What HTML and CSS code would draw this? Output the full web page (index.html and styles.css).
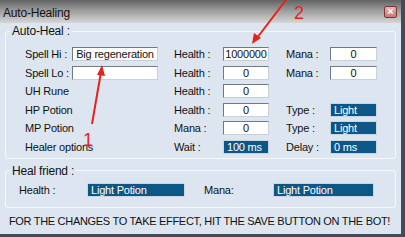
FILE: index.html
```html
<!DOCTYPE html>
<html lang="en">
<head>
    <meta charset="UTF-8">
    <title>Auto-Healing</title>
    <link rel="stylesheet" href="styles.css">
</head>
<body>
    <div class="window">
        <div class="titlebar">
            <span class="title">Auto-Healing</span>
            <span class="close">&#215;</span>
        </div>

        <fieldset class="group">
            <legend>Auto-Heal :</legend>
            <div class="heal-grid">
                <span class="lbl">Spell Hi :</span>
                <span class="field">Big regeneration</span>
                <span class="lbl mid">Health :</span>
                <span class="field">1000000</span>
                <span class="lbl right">Mana :</span>
                <span class="field">0</span>

                <span class="lbl">Spell Lo :</span>
                <span class="field"></span>
                <span class="lbl mid">Health :</span>
                <span class="field">0</span>
                <span class="lbl right">Mana :</span>
                <span class="field">0</span>

                <span class="lbl">UH Rune</span>
                <span></span>
                <span class="lbl mid">Health :</span>
                <span class="field">0</span>
                <span></span>
                <span></span>

                <span class="lbl">HP Potion</span>
                <span></span>
                <span class="lbl mid">Health :</span>
                <span class="field">0</span>
                <span class="lbl right">Type :</span>
                <span class="field sel">Light</span>

                <span class="lbl">MP Potion</span>
                <span></span>
                <span class="lbl mid">Mana :</span>
                <span class="field">0</span>
                <span class="lbl right">Type :</span>
                <span class="field sel">Light</span>

                <span class="lbl wide">Healer options</span>
                <span class="lbl mid">Wait :</span>
                <span class="field sel">100 ms</span>
                <span class="lbl right">Delay :</span>
                <span class="field sel">0 ms</span>
            </div>
        </fieldset>

        <fieldset class="group friend">
            <legend>Heal friend :</legend>
            <div class="friend-row">
                <span class="lbl f-health">Health :</span>
                <span class="field sel f-hfield">Light Potion</span>
                <span class="lbl f-mana">Mana:</span>
                <span class="field sel f-mfield">Light Potion</span>
            </div>
        </fieldset>

        <div class="footer">FOR THE CHANGES TO TAKE EFFECT, HIT THE SAVE BUTTON ON THE BOT!</div>

        <!-- red annotations drawn over the screenshot -->
        <svg class="marks" viewBox="0 0 405 237">
            <line x1="92" y1="124" x2="101" y2="72" stroke="#e3241c" stroke-width="2"/>
            <polygon points="102,65 97,75 105,76" fill="#e3241c"/>
            <text x="83" y="146" class="num">1</text>
            <line x1="286" y1="0" x2="257" y2="38" stroke="#e3241c" stroke-width="2"/>
            <polygon points="252,44 254,33 261,38" fill="#e3241c"/>
            <text x="294" y="19" class="num">2</text>
        </svg>
    </div>
</body>
</html>
```

FILE: styles.css
```css
* { box-sizing: border-box; }

body {
    margin: 0;
    font-family: "Liberation Sans", Arial, sans-serif;
    font-size: 11px;
    letter-spacing: -0.2px;
    color: #111;
}

.window {
    position: relative;
    width: 405px;
    height: 237px;
    background: #dde6f0;
    border-right: 4px solid #3f4c59;
    border-bottom: 3px solid #3f4c59;
    display: flex;
    flex-direction: column;
}

.titlebar {
    height: 23px;
    background: linear-gradient(180deg, #626262 0%, #9c9c9c 45%, #d6d6d6 100%);
    display: flex;
    align-items: center;
    justify-content: space-between;
    padding: 2px 4px 0 3px;
}

.title {
    font-size: 12px;
    color: #111;
}

.close {
    width: 13px;
    height: 12px;
    border: 1px solid #7a3535;
    border-radius: 2px;
    background: linear-gradient(180deg, #e6b0b0, #c97878);
    color: #fff;
    font-size: 11px;
    font-weight: bold;
    line-height: 9px;
    text-align: center;
    margin-top: -2px;
    letter-spacing: 0;
}

.group {
    margin: 1px 5px 0 5px;
    padding: 9px 0 4px 0;
    border: 1px solid #f6f9fc;
    border-radius: 3px;
    min-width: 0;
}

.group legend {
    font-size: 12px;
    line-height: 14px;
    padding: 0 2px;
    margin-left: 4px;
}

.heal-grid {
    display: grid;
    grid-template-columns: 47px 86px 65px 46px 61px 47px;
    grid-auto-rows: 14px;
    row-gap: 4.5px;
    padding-left: 19px;
}

.lbl {
    line-height: 14px;
    white-space: nowrap;
}

.lbl.mid { padding-left: 16px; }
.lbl.right { padding-left: 17px; }
.lbl.wide { grid-column: span 2; }

.field {
    height: 14px;
    line-height: 12px;
    background: #fff;
    border: 1px solid #6f7a85;
    border-right-color: #c8d0d8;
    border-bottom-color: #c8d0d8;
    text-align: center;
    white-space: nowrap;
    overflow: hidden;
}

.field.sel {
    background: #0d5786;
    color: #fff;
    border: 1px solid #c9d6e2;
    text-align: left;
    padding-left: 3px;
}

.friend {
    margin-top: 5px;
    padding: 5px 0 10px 0;
}

.friend-row {
    display: flex;
    align-items: center;
    height: 14px;
}

.f-health { margin-left: 13px; width: 68px; }
.f-hfield { width: 98px; }
.f-mana { margin-left: 19px; width: 69px; }
.f-mfield { width: 101px; }

.footer {
    flex: 1;
    display: flex;
    align-items: center;
    justify-content: center;
    font-size: 11px;
    letter-spacing: -0.3px;
    white-space: nowrap;
    padding-right: 2px;
}

.marks {
    position: absolute;
    left: 0;
    top: 0;
    width: 405px;
    height: 237px;
    pointer-events: none;
}

.num {
    font-family: "Liberation Sans", Arial, sans-serif;
    font-size: 18px;
    letter-spacing: 0;
    fill: #e3241c;
}
```
